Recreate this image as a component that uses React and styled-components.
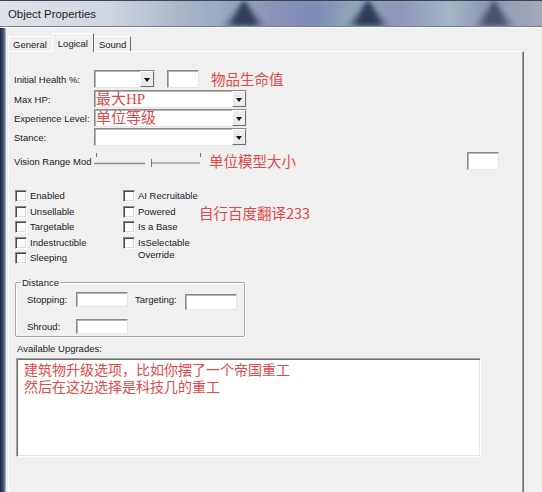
import React from 'react';
import styled, { createGlobalStyle } from 'styled-components';

const Global = createGlobalStyle`
  html, body {
    margin: 0;
    padding: 0;
    background: #f0f0f0;
  }
  body {
    font-family: "Liberation Sans", Arial, sans-serif;
    color: #1a1a1a;
  }
`;

const Window = styled.div`
  width: 542px;
  height: 492px;
  overflow: hidden;
  display: flex;
  flex-direction: column;
  background: #f0f0f0;
`;

const TitleBar = styled.div`
  flex: none;
  position: relative;
  overflow: hidden;
  height: 25px;
  display: flex;
  align-items: center;
  padding-left: 8px;
  border-top: 1px solid #3c4250;
  border-bottom: 1px solid #77808f;
  box-shadow: 0 1px 0 #ffffff;
  background: linear-gradient(90deg, #dfe4ea 0px, #cfd5df 110px, #aab6c8 180px, #98abc2 220px, #8c92b8 275px,
    #7d8bb8 315px, #8ea6b8 350px, #8f96bc 400px, #a4b6c6 450px, #8f98b8 485px, #a3a8b8 542px);

  /* the glass texture of the frame */
  &::before {
    content: '';
    position: absolute;
    inset: -4px 0 0 0;
    filter: blur(2.5px);
    background:
      conic-gradient(from 138deg at 244px 2px, transparent 0deg, rgba(40, 52, 82, 0.92) 20deg 64deg, transparent 84deg),
      conic-gradient(from 138deg at 368px 2px, transparent 0deg, rgba(38, 50, 80, 0.92) 20deg 64deg, transparent 84deg),
      conic-gradient(from 140deg at 494px 2px, transparent 0deg, rgba(60, 68, 94, 0.85) 18deg 60deg, transparent 80deg);
  }
`;

const Caption = styled.span`
  position: relative;
  font-size: 11.4px;
  color: #1e1e1e;
  white-space: nowrap;
`;

const Body = styled.div`
  flex: 1;
  display: flex;
  min-height: 0;
`;

const Edge = styled.div`
  flex: none;
  width: 6px;
  background: linear-gradient(90deg, #1f2940, #3b4a6a 50%, #7a8aa8 85%, #d0d6e0);
`;

const Client = styled.div`
  flex: 1;
  display: flex;
  flex-direction: column;
  padding: 6px 0 0 2px;
  min-width: 0;
`;

const TabStrip = styled.div`
  display: flex;
  align-items: flex-end;
  height: 18px;
  position: relative;
  z-index: 1;
`;

const Tab = styled.div`
  box-sizing: border-box;
  display: flex;
  align-items: center;
  height: ${(p) => (p.$active ? 19 : 15)}px;
  margin-bottom: ${(p) => (p.$active ? -1 : 0)}px;
  padding: 0 ${(p) => p.$pad}px;
  font-size: 9.5px;
  border-top: 1px solid #ffffff;
  border-left: 1px solid #ffffff;
  border-right: 1px solid ${(p) => (p.$edge ? '#6a6a6a' : 'transparent')};
  background: #f0f0f0;
  white-space: nowrap;
`;

const Panel = styled.div`
  flex: 1;
  display: flex;
  flex-direction: column;
  margin-right: 18px;
  padding: 18px 0 0 5px;
  border-top: 1px solid #ffffff;
  border-left: 1px solid #ffffff;
  border-right: 1px solid #696969;
  box-shadow: inset -1px 0 0 #a0a0a0;
  background: #f0f0f0;
`;

const FieldRow = styled.div`
  display: flex;
  align-items: center;
  height: 18px;
  margin-bottom: ${(p) => p.$after || 1}px;
`;

const Label = styled.div`
  flex: none;
  width: ${(p) => p.$w || 80}px;
  margin-left: ${(p) => p.$ml || 0}px;
  font-size: 9.5px;
  white-space: nowrap;
`;

const Sunken = styled.div`
  box-sizing: border-box;
  flex: none;
  width: ${(p) => p.$w}px;
  height: ${(p) => p.$h || 18}px;
  margin-left: ${(p) => p.$ml || 0}px;
  margin-top: ${(p) => p.$mt || 0}px;
  background: #ffffff;
  border: 1px solid;
  border-color: #8a8a8a #e6e6e6 #e6e6e6 #8a8a8a;
  box-shadow: inset 1px 1px 0 #b4b4b4;
`;

const Combo = styled(Sunken)`
  display: flex;
  overflow: hidden;
`;

const ComboValue = styled.div`
  flex: 1;
  padding-left: 1px;
  font-family: "Liberation Serif", "Noto Sans CJK SC", serif;
  font-size: 15px;
  line-height: 16px;
  color: #e54848;
  white-space: nowrap;
  overflow: hidden;
`;

const DropButton = styled.div`
  flex: none;
  width: 14px;
  box-sizing: border-box;
  background: #ececec;
  border: 1px solid;
  border-color: #ffffff #707070 #707070 #ffffff;
  display: flex;
  align-items: center;
  justify-content: center;

  &::after {
    content: '';
    border-top: 4px solid #111;
    border-left: 3.5px solid transparent;
    border-right: 3.5px solid transparent;
    margin-top: 1px;
  }
`;

const Note = styled.div`
  flex: none;
  margin-left: ${(p) => p.$ml || 0}px;
  margin-top: ${(p) => p.$mt || 0}px;
  font-family: "Noto Sans CJK SC", sans-serif;
  font-size: 14.5px;
  line-height: 18px;
  color: #e54848;
  white-space: nowrap;
`;

const VisionRow = styled.div`
  display: flex;
  align-items: center;
  height: 22px;
  margin-top: 3px;
`;

const Slider = styled.svg`
  flex: none;
  margin-left: -1px;
`;

const CheckArea = styled.div`
  display: flex;
  align-items: flex-start;
  margin-top: 16px;
`;

const CheckColumn = styled.div`
  flex: none;
  width: ${(p) => p.$w}px;
  margin-left: ${(p) => p.$ml || 0}px;
  display: flex;
  flex-direction: column;
`;

const CheckRow = styled.div`
  display: flex;
  align-items: flex-start;
  min-height: 15.5px;
`;

const Box = styled.div`
  flex: none;
  box-sizing: border-box;
  width: 12px;
  height: 12px;
  margin-top: 2px;
  background: #fbfbfb;
  border: 1px solid;
  border-color: #8a8a8a #ffffff #ffffff #8a8a8a;
  box-shadow: inset 1px 1px 0 #4a4a4a, inset -1px -1px 0 #dcdcdc;
`;

const CheckLabel = styled.div`
  margin-left: 3px;
  padding-top: 2px;
  font-size: 9.5px;
  line-height: 12px;
  white-space: nowrap;
`;

const Group = styled.fieldset`
  box-sizing: border-box;
  width: 230px;
  margin: 11px 0 0 1px;
  padding: 0 7px 2px 5px;
  border: 1px solid #a6a6a6;
  border-radius: 2px;
  box-shadow: inset 1px 1px 0 #ffffff, 1px 1px 0 #ffffff;
`;

const Legend = styled.legend`
  padding: 0 1px;
  font-size: 9.5px;
  line-height: 12px;
`;

const GroupRow = styled.div`
  display: flex;
  align-items: center;
  margin: ${(p) => p.$mt || 0}px 0 0 6px;
`;

const Caption2 = styled.div`
  margin: 6px 0 0 3px;
  font-size: 9.5px;
  line-height: 12px;
`;

const ListBox = styled.div`
  box-sizing: border-box;
  width: 465px;
  height: 99px;
  margin: 3px 0 0 2px;
  padding: 2px 0 0 7px;
  background: #ffffff;
  border: 1px solid;
  border-color: #a0a0a0 #ffffff #ffffff #a0a0a0;
  box-shadow: inset 1px 1px 0 #6f6f6f, inset -1px -1px 0 #e6e6e6;
`;

const ListLine = styled.div`
  height: 17px;
  font-family: "Noto Sans CJK SC", sans-serif;
  font-size: 14px;
  line-height: 17px;
  color: #e54848;
  white-space: nowrap;
`;

const ComboBox = ({ w, value }) => (
  <Combo $w={w}>
    <ComboValue>{value}</ComboValue>
    <DropButton />
  </Combo>
);

const Check = ({ children }) => (
  <CheckRow>
    <Box />
    <CheckLabel>{children}</CheckLabel>
  </CheckRow>
);

const App = () => (
  <Window>
    <Global />
    <TitleBar>
      <Caption>Object Properties</Caption>
    </TitleBar>
    <Body>
      <Edge />
      <Client>
        <TabStrip>
          <Tab $pad={4}>General</Tab>
          <Tab $pad={5} $active $edge>
            Logical
          </Tab>
          <Tab $pad={4} $edge>
            Sound
          </Tab>
        </TabStrip>
        <Panel>
          <FieldRow $after={2}>
            <Label>Initial Health %:</Label>
            <ComboBox w={61} />
            <Sunken $w={32} $ml={12} />
            <Note $ml={12}>物品生命值</Note>
          </FieldRow>
          <FieldRow>
            <Label>Max HP:</Label>
            <ComboBox w={153} value="最大HP" />
          </FieldRow>
          <FieldRow>
            <Label>Experience Level:</Label>
            <ComboBox w={153} value="单位等级" />
          </FieldRow>
          <FieldRow>
            <Label>Stance:</Label>
            <ComboBox w={153} />
          </FieldRow>

          <VisionRow>
            <Label>Vision Range Mod</Label>
            <Slider width="110" height="22" viewBox="0 0 110 22">
              <g stroke="#7a7a7a" strokeWidth="1" fill="none">
                <line x1="3.5" y1="3" x2="3.5" y2="7" />
                <line x1="107.5" y1="3" x2="107.5" y2="7" />
                <line x1="1" y1="13.5" x2="52" y2="13.5" stroke="#8a8a8a" strokeWidth="1.4" />
                <line x1="58" y1="13" x2="107" y2="13" />
                <line x1="58.5" y1="9" x2="58.5" y2="17" />
              </g>
            </Slider>
            <Note $ml={6}>单位模型大小</Note>
            <Sunken $w={32} $ml={171} />
          </VisionRow>

          <CheckArea>
            <CheckColumn $w={108} $ml={1}>
              <Check>Enabled</Check>
              <Check>Unsellable</Check>
              <Check>Targetable</Check>
              <Check>Indestructible</Check>
              <Check>Sleeping</Check>
            </CheckColumn>
            <CheckColumn $w={76}>
              <Check>AI Recruitable</Check>
              <Check>Powered</Check>
              <Check>Is a Base</Check>
              <Check>
                IsSelectable
                <br />
                Override
              </Check>
            </CheckColumn>
            <Note $mt={16}>自行百度翻译233</Note>
          </CheckArea>

          <Group>
            <Legend>Distance</Legend>
            <GroupRow $mt={1}>
              <Label $w={49}>Stopping:</Label>
              <Sunken $w={52} $h={15} />
              <Label $w={50} $ml={7}>
                Targeting:
              </Label>
              <Sunken $w={52} $h={16} $mt={4} />
            </GroupRow>
            <GroupRow $mt={9}>
              <Label $w={49}>Shroud:</Label>
              <Sunken $w={52} $h={15} />
            </GroupRow>
          </Group>

          <Caption2>Available Upgrades:</Caption2>
          <ListBox>
            <ListLine>建筑物升级选项，比如你摆了一个帝国重工</ListLine>
            <ListLine>然后在这边选择是科技几的重工</ListLine>
          </ListBox>
        </Panel>
      </Client>
    </Body>
  </Window>
);

export default App;
